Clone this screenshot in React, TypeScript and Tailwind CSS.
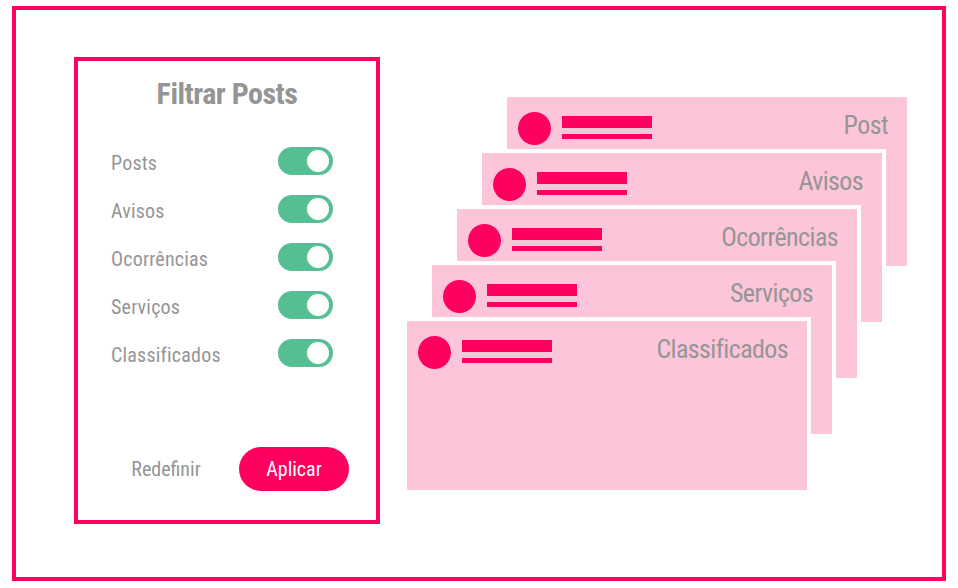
import * as React from 'react'

const filters = ['Posts', 'Avisos', 'Ocorrências', 'Serviços', 'Classificados']
const cards = ['Post', 'Avisos', 'Ocorrências', 'Serviços', 'Classificados']

function Toggle() {
  return (
    <div className="flex h-[28px] w-[55px] items-center justify-end rounded-full bg-[#57bd92] pr-[4px]">
      <div className="size-[22px] rounded-full bg-white" />
    </div>
  )
}

function PostCard({ title }: { title: string }) {
  return (
    <div className="flex h-[177px] w-[408px] items-start border-4 border-white bg-[#fdc5da] pl-[11px] pr-[19px] pt-[15px]">
      <div className="size-[33px] shrink-0 rounded-full bg-[#ff0060]" />
      <div className="ml-[11px] mt-[4px] flex w-[90px] flex-col gap-[6px]">
        <div className="h-[12px] bg-[#ff0060]" />
        <div className="h-[5px] bg-[#ff0060]" />
      </div>
      <span className="ml-auto text-[26px] leading-none tracking-[-0.6px] text-[#959595] [font-stretch:condensed]">
        {title}
      </span>
    </div>
  )
}

export default function App() {
  return (
    <div className="h-[588px] w-[958px] bg-white pl-[12px] pt-[6px] font-['Roboto',sans-serif]">
      <div className="flex h-[575px] w-[934px] border-4 border-[#ff0060] pl-[58px] pt-[47px]">
        {/* filter panel */}
        <div className="flex h-[467px] w-[306px] flex-col border-4 border-[#ff0060] [font-stretch:condensed]">
          <h1 className="pt-[18px] text-center text-[30px] font-bold leading-none tracking-[-0.5px] text-[#959595]">
            Filtrar Posts
          </h1>
          <div className="mt-[38px] flex flex-col gap-[20px] pl-[33px] pr-[43px]">
            {filters.map((f) => (
              <div key={f} className="flex h-[28px] items-center justify-between">
                <span className="pt-[3px] text-[20px] leading-none tracking-[0.2px] text-[#959595]">{f}</span>
                <Toggle />
              </div>
            ))}
          </div>
          <div className="mt-auto flex gap-[18px] pb-[29px] pl-[33px]">
            <button type="button" className="h-[44px] w-[110px] text-[20px] text-[#959595]">
              Redefinir
            </button>
            <button type="button" className="h-[44px] w-[110px] rounded-full bg-[#ff0060] text-[20px] text-white">
              Aplicar
            </button>
          </div>
        </div>

        {/* stacked post cards */}
        <div className="relative ml-[23px] mt-[36px] h-[401px] w-[508px]">
          {cards.map((c, i) => (
            <div key={c} className="absolute" style={{ left: (4 - i) * 25, top: i * 56 }}>
              <PostCard title={c} />
            </div>
          ))}
        </div>
      </div>
    </div>
  )
}
